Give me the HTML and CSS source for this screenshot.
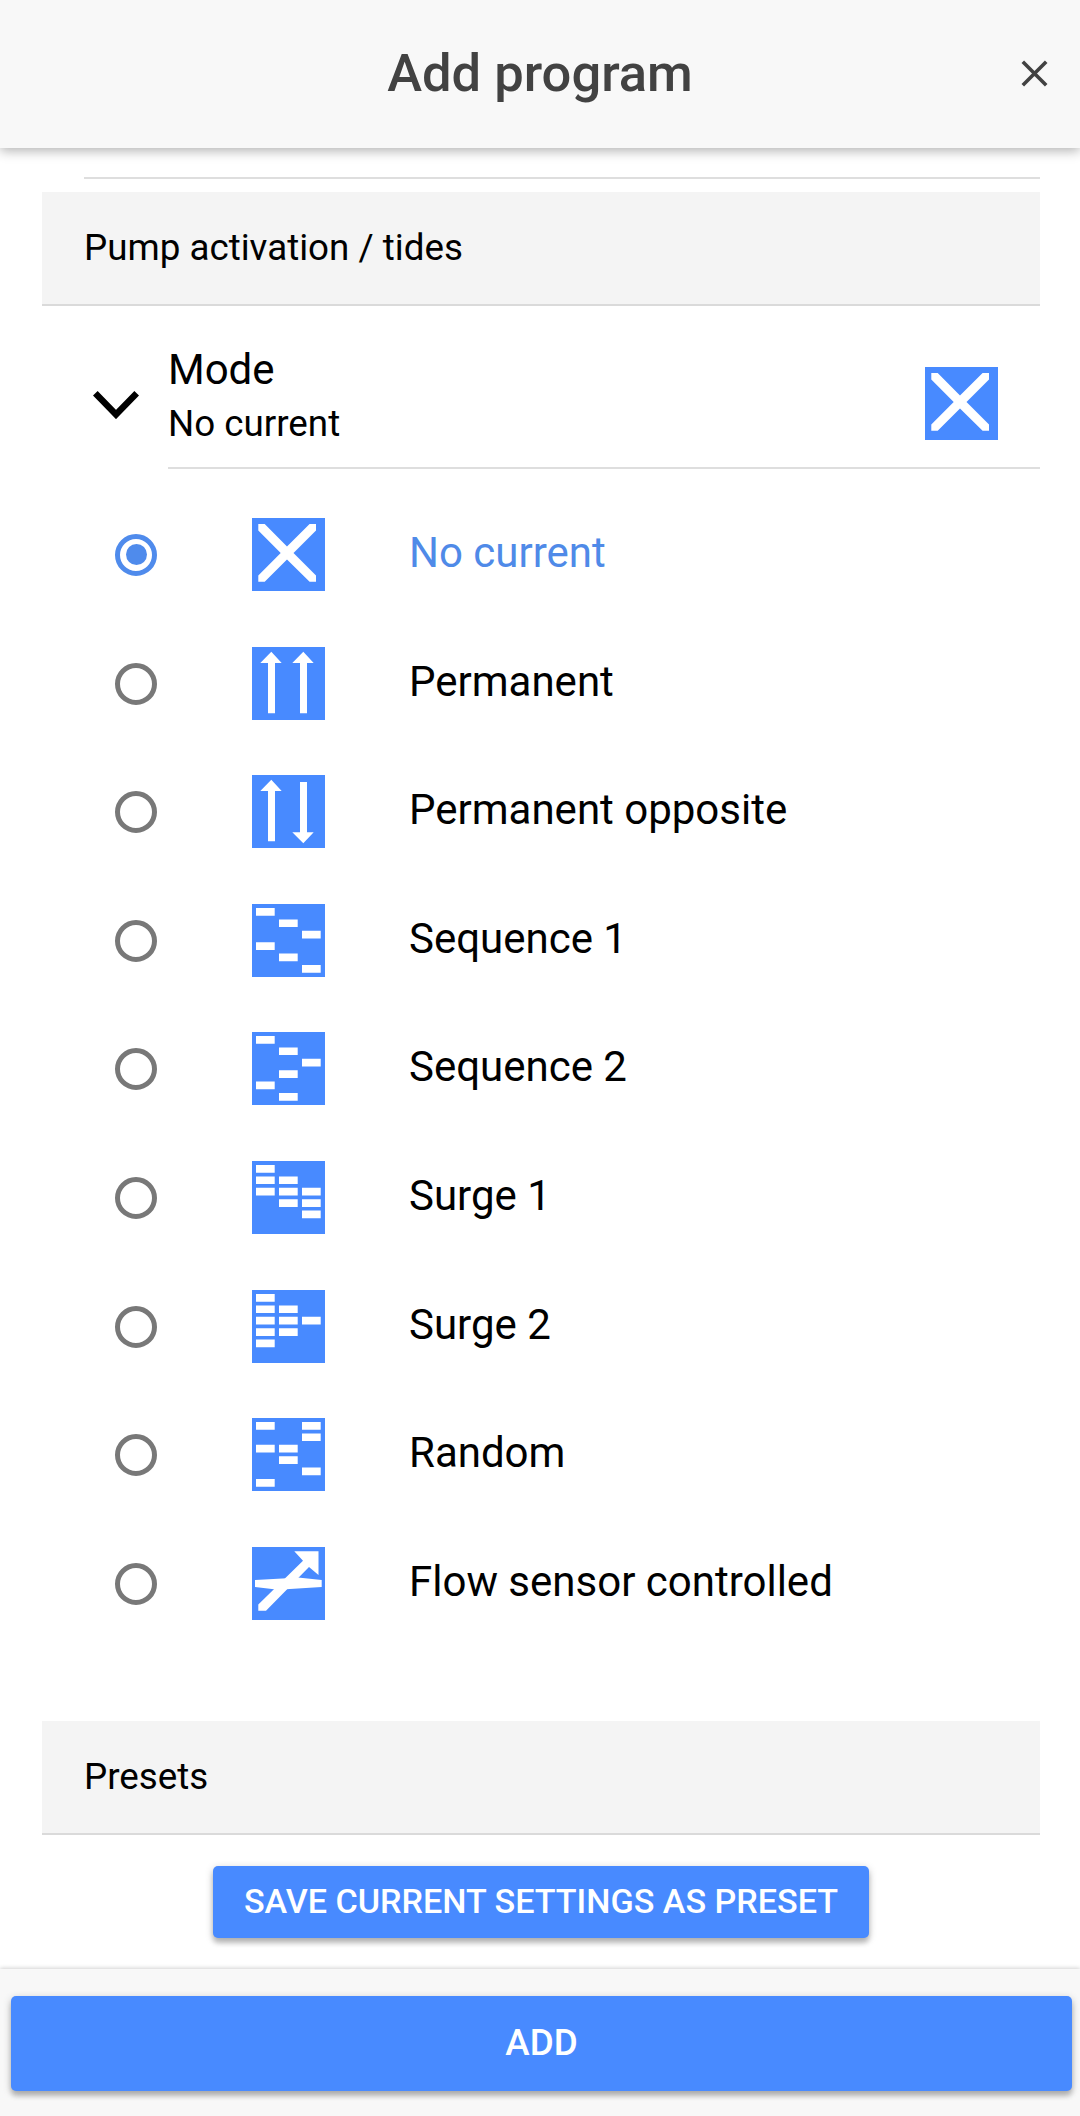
FILE: index.html
```html
<!DOCTYPE html>
<html lang="en">
<head>
<meta charset="utf-8">
<title>Add program</title>
<link rel="stylesheet" href="styles.css">
</head>
<body>
<svg class="sprite" aria-hidden="true">
  <symbol id="none" viewBox="0 0 73 73"><path d="M6.3 6h6.4L35 28.6 57.600 6H64v6.400L41.500 35 64 57.400v6.400h-6.400L35 41.500 12.700 63.800H6.300v-6.400L28.700 35 6.300 12.400z"/></symbol>
  <symbol id="up" viewBox="0 0 73 73"><path d="M19.300 4.700 29.700 16H23v50.300h-7V16H8.300z"/></symbol>
  <symbol id="permanent" viewBox="0 0 73 73"><use href="#up"/><path d="M51.300 4.700 61.700 16H55v50.300h-7V16h-7.700z"/></symbol>
  <symbol id="opposite" viewBox="0 0 73 73"><use href="#up"/><path d="M48 7h7v50.300h6.700L51.300 68.300 40.300 57.300H48z"/></symbol>
  <symbol id="seq1" viewBox="0 0 73 73"><path d="M4 4h18.700v7.700H4zM27 15.400h18.700v7.700H27zM50 26.800h18.700v7.700H50zM4 38.200h18.700v7.700H4zM27 49.600h18.700v7.700H27zM50 61h18.700v7.700H50z"/></symbol>
  <symbol id="seq2" viewBox="0 0 73 73"><path d="M4 4h18.700v7.700H4zM27 15.400h18.700v7.700H27zM50 26.800h18.700v7.700H50zM27 38.200h18.700v7.700H27zM4 49.600h18.700v7.700H4zM27 61h18.700v7.700H27z"/></symbol>
  <symbol id="surge1" viewBox="0 0 73 73"><path d="M4 4h18.700v7.700H4zM4 15.400h18.700v7.700H4zM4 26.800h18.700v7.700H4zM27 15.400h18.700v7.700H27zM27 26.800h18.700v7.700H27zM27 38.200h18.700v7.700H27zM50 26.800h18.700v7.700H50zM50 38.200h18.700v7.700H50zM50 49.600h18.700v7.700H50z"/></symbol>
  <symbol id="surge2" viewBox="0 0 73 73"><path d="M4 4h18.700v7.700H4zM4 15.400h18.700v7.700H4zM4 26.800h18.700v7.700H4zM4 38.200h18.700v7.700H4zM4 49.600h18.700v7.700H4zM27 15.400h18.700v7.700H27zM27 26.800h18.700v7.700H27zM27 38.200h18.700v7.700H27zM50 26.800h18.700v7.700H50z"/></symbol>
  <symbol id="random" viewBox="0 0 73 73"><path d="M4 4h18.700v7.700H4zM50 4h18.700v7.700H50zM50 15.400h18.700v7.700H50zM4 26.800h18.700v7.700H4zM27 26.800h18.700v7.700H27zM27 38.200h18.700v7.700H27zM50 49.600h18.700v7.700H50zM4 61h18.700v7.700H4z"/></symbol>
  <symbol id="flow" viewBox="0 0 73 73"><path d="M6.300 57.500 51 13.700 42.300 4.300H66.500V28L57 20 14 63.800H6.300z"/><path d="M3 33 35 31.300 46 30.500 69.700 33V40L34 42.300H22L3 40z"/></symbol>
</svg>

<header class="toolbar">
  <h1 class="title">Add program</h1>
  <button class="close" aria-label="Close"><svg width="27" height="27" viewBox="0 0 27 27"><path d="M1.800 1.800 25.200 25.200M25.200 1.800 1.800 25.200"/></svg></button>
</header>

<main class="content">
  <div class="previous-item"></div>
  <h2 class="section">Pump activation / tides</h2>
  <div class="mode">
    <svg class="chevron" width="46" height="28" viewBox="0 0 46 28"><path d="M2.300 2.300 23 23.500 43.700 2.300"/></svg>
    <div class="mode-body">
      <div class="mode-text"><div class="mode-name">Mode</div><div class="mode-value">No current</div></div>
      <svg class="icon"><use href="#none"/></svg>
    </div>
  </div>

  <ul class="options">
    <li class="option selected"><span class="radio"></span><svg class="icon"><use href="#none"/></svg><span class="label">No current</span></li>
    <li class="option"><span class="radio"></span><svg class="icon"><use href="#permanent"/></svg><span class="label">Permanent</span></li>
    <li class="option"><span class="radio"></span><svg class="icon"><use href="#opposite"/></svg><span class="label">Permanent opposite</span></li>
    <li class="option"><span class="radio"></span><svg class="icon"><use href="#seq1"/></svg><span class="label">Sequence 1</span></li>
    <li class="option"><span class="radio"></span><svg class="icon"><use href="#seq2"/></svg><span class="label">Sequence 2</span></li>
    <li class="option"><span class="radio"></span><svg class="icon"><use href="#surge1"/></svg><span class="label">Surge 1</span></li>
    <li class="option"><span class="radio"></span><svg class="icon"><use href="#surge2"/></svg><span class="label">Surge 2</span></li>
    <li class="option"><span class="radio"></span><svg class="icon"><use href="#random"/></svg><span class="label">Random</span></li>
    <li class="option"><span class="radio"></span><svg class="icon"><use href="#flow"/></svg><span class="label">Flow sensor controlled</span></li>
  </ul>

  <h2 class="section">Presets</h2>
  <button class="button save">SAVE CURRENT SETTINGS AS PRESET</button>
</main>

<footer class="footer"><button class="button add">ADD</button></footer>
</body>
</html>
```
FILE: styles.css
```css
* { box-sizing: border-box; }

body {
  margin: 0;
  height: 2116px;
  display: flex;
  flex-direction: column;
  overflow: hidden;
  background: #fff;
  color: #000;
  font-family: Roboto, sans-serif;
  font-size: 42px;
}

.sprite { display: none; }

button { border: 0; font-family: inherit; }

.toolbar {
  flex: none;
  height: 148px;
  padding-bottom: 1px;
  display: grid;
  grid-template-columns: 90px 1fr 90px;
  align-items: center;
  background: #f8f8f8;
  box-shadow: 0 3px 11px rgba(0, 0, 0, .3);
}

.title {
  grid-column: 2;
  margin: 0;
  padding-bottom: 1px;
  text-align: center;
  font-size: 52.5px;
  line-height: 62px;
  font-weight: 500;
  color: #424242;
}

.close {
  display: flex;
  padding: 0 0 0 31px;
  background: none;
}

.close path { fill: none; stroke: #424242; stroke-width: 3.600; }

.content {
  flex: 1;
  display: flex;
  flex-direction: column;
  padding: 0 40px 0 42px;
}

.previous-item {
  height: 31px;
  margin: 0 0 13px 42px;
  border-bottom: 2px solid #dedede;
}

.section {
  flex: none;
  height: 114px;
  margin: 0;
  padding-left: 42px;
  background: #f4f4f4;
  border-bottom: 2px solid #dadada;
  font-size: 36.750px;
  font-weight: 400;
  line-height: 112px;
}

.mode {
  flex: none;
  height: 163px;
  display: flex;
  padding-left: 51px;
}

.chevron { margin: 85px 29px 0 0; }
.chevron path { fill: none; stroke: #000; stroke-width: 6.500; }

.mode-body {
  flex: 1;
  display: flex;
  justify-content: space-between;
  padding: 39px 42px 0 0;
  border-bottom: 2px solid #dedede;
}

.mode-body .icon { margin-top: 22px; }
.mode-name { line-height: 49px; }
.mode-value { margin-top: 8px; font-size: 36.750px; line-height: 43px; }

.icon {
  flex: none;
  width: 73px;
  height: 73px;
  background: #488aff;
  fill: #fff;
}

.options {
  list-style: none;
  margin: 21.100px 0 73.300px;
  padding: 0 0 0 73px;
}

.option {
  height: 128.625px;
  display: flex;
  align-items: center;
}

.option .icon { margin: 0 84px 0 95px; }
.label { padding-bottom: 4px; }

.radio {
  flex: none;
  width: 42px;
  height: 42px;
  margin-top: 1px;
  display: grid;
  place-items: center;
  border: 5px solid #787878;
  border-radius: 50%;
}

.selected { color: #4f8ae8; }
.selected .radio { border-color: #4f8bec; }
.selected .radio::before {
  content: "";
  width: 21px;
  height: 21px;
  border-radius: 50%;
  background: #4f8bec;
}

.button {
  padding: 0;
  border-radius: 5px;
  background: #488aff;
  color: #fff;
  font-weight: 500;
  box-shadow: 0 5px 5px rgba(0, 0, 0, .2), 0 2px 8px rgba(0, 0, 0, .2);
}

.save {
  flex: none;
  align-self: center;
  width: 656px;
  height: 72px;
  margin-top: 31px;
  padding-bottom: 2px;
  font-size: 34.125px;
  line-height: 70px;
}

.footer {
  flex: none;
  height: 147px;
  padding: 27px 8px 0 11px;
  background: #f8f8f8;
  box-shadow: 0 -1px 4px rgba(0, 0, 0, .18);
}

.add {
  display: block;
  width: 100%;
  height: 95px;
  padding-bottom: 2px;
  font-size: 36.750px;
  line-height: 93px;
}
```
